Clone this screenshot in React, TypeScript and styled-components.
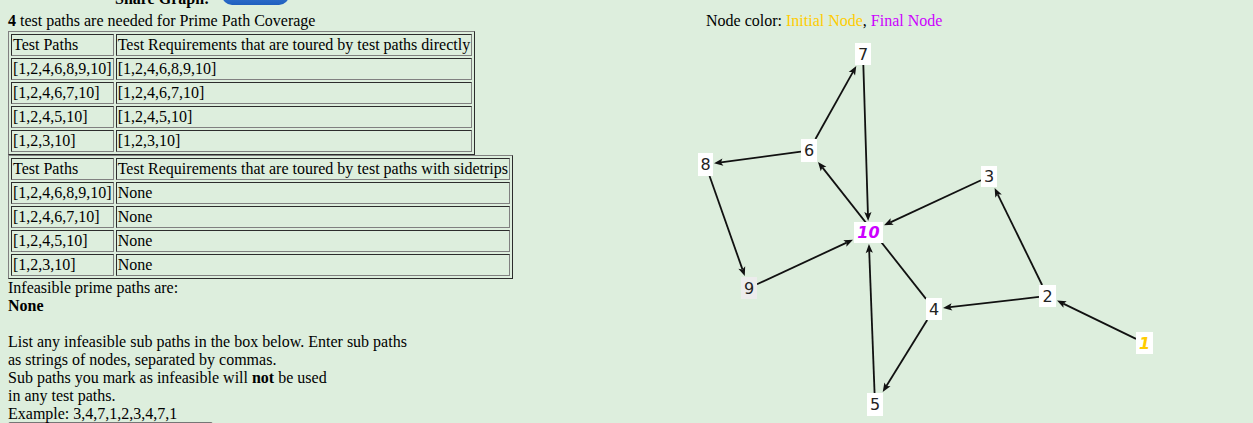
import React, { FC } from "react";
import styled, { createGlobalStyle } from "styled-components";

const GlobalStyle = createGlobalStyle`
  html, body {
    margin: 0;
    padding: 0;
    overflow: hidden;
    background: #ddeedd;
  }
  body {
    font-family: "Liberation Serif", "Times New Roman", serif;
    font-size: 16px;
    line-height: 18px;
    color: #000;
  }
`;

const Page = styled.div`
  display: flex;
  margin-top: -14px;
  padding-left: 8px;
`;

const LeftCol = styled.div`
  flex: 0 0 682px;
`;

const RightCol = styled.div`
  flex: 1;
`;

const ShareRow = styled.div<{ $indent?: number }>`
  height: 22px;
  margin-bottom: 4px;
  padding-left: ${(p) => p.$indent ?? 107}px;
  display: flex;
  align-items: flex-end;
  gap: 13px;
  font-weight: bold;
`;

const ShareButton = styled.button`
  width: 67px;
  height: 20px;
  margin-bottom: 3px;
  border: none;
  border-radius: 10px;
  background: linear-gradient(#4a86dc, #1f5fbf);
  padding: 0;
`;

const Line = styled.div<{ $h?: number }>`
  height: ${(p) => p.$h ?? 18}px;
  white-space: nowrap;
`;

const Table = styled.table`
  border: 1px outset #808080;
  border-spacing: 2px;
  font-size: 16px;
  line-height: 18px;
`;

const Cell = styled.td`
  border: 1px inset #808080;
  padding: 1px;
  white-space: nowrap;
`;

const Notes = styled.div`
  margin-top: 0;
`;

const Blank = styled.div`
  height: 18px;
`;

const SubPaths = styled.textarea`
  display: block;
  width: 205px;
  height: 40px;
  margin-top: -1px;
  box-sizing: border-box;
  border: 1px solid #767676;
  border-radius: 2px;
  background: #fff;
  resize: none;
`;

const Legend = styled.div`
  height: 18px;
  padding-left: 16px;
  white-space: nowrap;
`;

const Tint = styled.span<{ $color: string }>`
  color: ${(p) => p.$color};
`;

const Graph = styled.svg`
  display: block;
  font-family: "DejaVu Sans", Verdana, sans-serif;
`;

type Kind = "normal" | "initial" | "final" | "hover";

interface INode {
  id: string;
  x: number;
  y: number;
  w: number;
  h: number;
  kind?: Kind;
}

const nodes: INode[] = [
  { id: "1", x: 1136, y: 332, w: 17, h: 22, kind: "initial" },
  { id: "2", x: 1039, y: 285, w: 17, h: 22 },
  { id: "3", x: 981, y: 166, w: 16, h: 21 },
  { id: "4", x: 926, y: 298, w: 16, h: 22 },
  { id: "5", x: 867, y: 393, w: 16, h: 23 },
  { id: "6", x: 801, y: 139, w: 16, h: 23 },
  { id: "7", x: 855, y: 43, w: 16, h: 22 },
  { id: "8", x: 698, y: 153, w: 15, h: 23 },
  { id: "9", x: 741, y: 277, w: 16, h: 22, kind: "hover" },
  { id: "10", x: 854, y: 222, w: 29, h: 21, kind: "final" },
];

const edges: [string, string][] = [
  ["1", "2"], ["2", "3"], ["2", "4"], ["3", "10"],
  ["4", "5"], ["4", "6"], ["5", "10"], ["6", "7"],
  ["6", "8"], ["7", "10"], ["8", "9"], ["9", "10"],
];

const directRows: [string, string][] = [
  ["[1,2,4,6,8,9,10]", "[1,2,4,6,8,9,10]"],
  ["[1,2,4,6,7,10]", "[1,2,4,6,7,10]"],
  ["[1,2,4,5,10]", "[1,2,4,5,10]"],
  ["[1,2,3,10]", "[1,2,3,10]"],
];

const sidetripRows: [string, string][] = [
  ["[1,2,4,6,8,9,10]", "None"],
  ["[1,2,4,6,7,10]", "None"],
  ["[1,2,4,5,10]", "None"],
  ["[1,2,3,10]", "None"],
];

const byId = (id: string) => nodes.find((n) => n.id === id)!;

// point where the ray from the node centre along (dx, dy) leaves its box
const edgePoint = (n: INode, dx: number, dy: number, pad: number) => {
  const cx = n.x + n.w / 2;
  const cy = n.y + n.h / 2;
  const hw = n.w / 2 + pad;
  const hh = n.h / 2 + pad;
  const t = Math.min(
    dx === 0 ? Infinity : hw / Math.abs(dx),
    dy === 0 ? Infinity : hh / Math.abs(dy)
  );
  return { x: cx + dx * t, y: cy + dy * t };
};

const Edge: FC<{ from: string; to: string }> = ({ from, to }) => {
  const a = byId(from);
  const b = byId(to);
  const ax = a.x + a.w / 2;
  const ay = a.y + a.h / 2;
  const bx = b.x + b.w / 2;
  const by = b.y + b.h / 2;
  const len = Math.hypot(bx - ax, by - ay);
  const dx = (bx - ax) / len;
  const dy = (by - ay) / len;
  const start = edgePoint(a, dx, dy, 0);
  const tip = edgePoint(b, -dx, -dy, 1);
  const L = 9;
  const W = 3.6;
  const baseX = tip.x - dx * L;
  const baseY = tip.y - dy * L;
  const notchX = tip.x - dx * (L - 2);
  const notchY = tip.y - dy * (L - 2);
  const px = -dy;
  const py = dx;
  const head = `M${tip.x},${tip.y} L${baseX + px * W},${baseY + py * W} L${notchX},${notchY} L${baseX - px * W},${baseY - py * W} Z`;
  return (
    <g>
      <line x1={start.x} y1={start.y} x2={notchX} y2={notchY} stroke="#111" strokeWidth={1.8} />
      <path d={head} fill="#111" />
    </g>
  );
};

const labelColor: Record<Kind, string> = {
  normal: "#222",
  hover: "#222",
  initial: "#ffcc00",
  final: "#cc00ff",
};

const Node: FC<{ node: INode }> = ({ node }) => {
  const kind = node.kind ?? "normal";
  const special = kind === "initial" || kind === "final";
  return (
    <g>
      <rect x={node.x} y={node.y} width={node.w} height={node.h} fill={kind === "hover" ? "#ececec" : "#ffffff"} />
      <text
        x={node.x + node.w / 2}
        y={node.y + node.h / 2 + 5.5}
        textAnchor="middle"
        fontSize={16}
        fontWeight={special ? "bold" : "normal"}
        fontStyle={special ? "italic" : "normal"}
        fill={labelColor[kind]}
      >
        {node.id}
      </text>
    </g>
  );
};

const PathTable: FC<{ heading: string; rows: [string, string][] }> = ({ heading, rows }) => (
  <Table>
    <tbody>
      <tr>
        <Cell>Test Paths</Cell>
        <Cell>{heading}</Cell>
      </tr>
      {rows.map(([path, req], i) => (
        <tr key={i}>
          <Cell>{path}</Cell>
          <Cell>{req}</Cell>
        </tr>
      ))}
    </tbody>
  </Table>
);

const App: FC = () => (
  <>
    <GlobalStyle />
    <Page>
      <LeftCol>
        <ShareRow>
          <span>Share Graph:</span>
          <ShareButton aria-label="share" />
        </ShareRow>
        <Line $h={19}>
          <b>4</b> test paths are needed for Prime Path Coverage
        </Line>
        <PathTable heading="Test Requirements that are toured by test paths directly" rows={directRows} />
        <PathTable heading="Test Requirements that are toured by test paths with sidetrips" rows={sidetripRows} />
        <Notes>
          <Line>Infeasible prime paths are:</Line>
          <Line>
            <b>None</b>
          </Line>
          <Blank />
          <Line>List any infeasible sub paths in the box below. Enter sub paths</Line>
          <Line>as strings of nodes, separated by commas.</Line>
          <Line>
            Sub paths you mark as infeasible will <b>not</b> be used
          </Line>
          <Line>in any test paths.</Line>
          <Line>Example: 3,4,7,1,2,3,4,7,1</Line>
          <SubPaths />
        </Notes>
      </LeftCol>
      <RightCol>
        <ShareRow $indent={0} />
        <Legend>
          Node color: <Tint $color="#ffcc00">Initial Node</Tint>, <Tint $color="#cc00ff">Final Node</Tint>
        </Legend>
        <Graph width={563} height={394} viewBox="690 30 563 394">
          {edges.map(([f, t]) => (
            <Edge key={f + "-" + t} from={f} to={t} />
          ))}
          {nodes.map((n) => (
            <Node key={n.id} node={n} />
          ))}
        </Graph>
      </RightCol>
    </Page>
  </>
);

export default App;
